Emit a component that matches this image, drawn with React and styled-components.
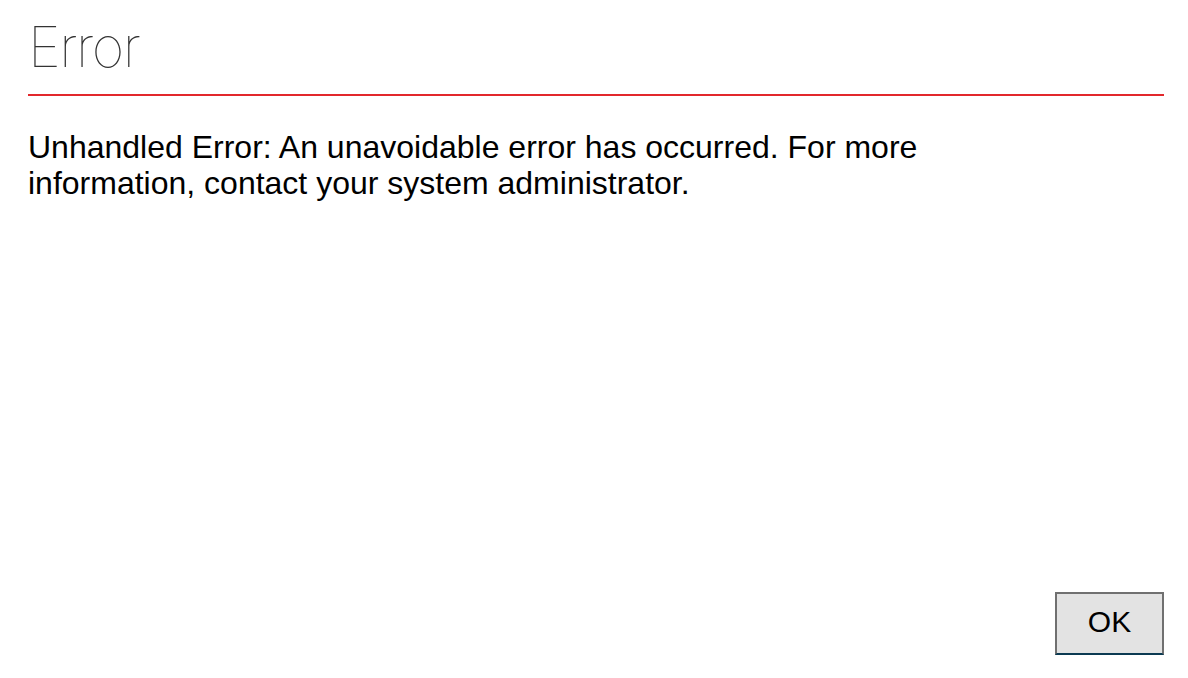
import styled, { createGlobalStyle } from "styled-components"

const GlobalStyle = createGlobalStyle`
    html, body {
        margin: 0;
        padding: 0;
        background: #ffffff;
    }
`
const Page = styled.div`
    display: flex;
    flex-direction: column;
    box-sizing: border-box;
    height: 100vh;
    padding: 0 24px 23px 28px;
`
const Header = styled.div`
    border-bottom: 2px solid #e2282c;
    height: 96px;
    box-sizing: border-box;
    padding-top: 12px;
`
const Title = styled.h1`
    margin: 0;
    font-family: Inter, "Liberation Sans", sans-serif;
    font-weight: 100;
    font-size: 56px;
    line-height: 70px;
    color: #333333;
    letter-spacing: -1.5px;
`
const Message = styled.p`
    margin: 33px 0 0 0;
    max-width: 920px;
    font-family: "Liberation Sans", Arial, sans-serif;
    font-size: 32px;
    line-height: 36px;
    color: #000000;
`
const Footer = styled.div`
    margin-top: auto;
    display: flex;
    justify-content: flex-end;
`
const Button = styled.button`
    width: 109px;
    height: 63px;
    box-sizing: border-box;
    background: #e3e3e3;
    border: 2px solid #707070;
    border-bottom-color: #0b3a52;
    font-family: "Liberation Sans", Arial, sans-serif;
    font-size: 30px;
    line-height: 30px;
    color: #000000;
    padding: 0 0 4px 0;
`

const App = () => {
    return(
        <Page>
            <GlobalStyle />
            <Header>
                <Title>Error</Title>
            </Header>
            <Message>
                Unhandled Error: An unavoidable error has occurred. For more information, contact your system administrator.
            </Message>
            <Footer>
                <Button>OK</Button>
            </Footer>
        </Page>
    )
}

export default App
